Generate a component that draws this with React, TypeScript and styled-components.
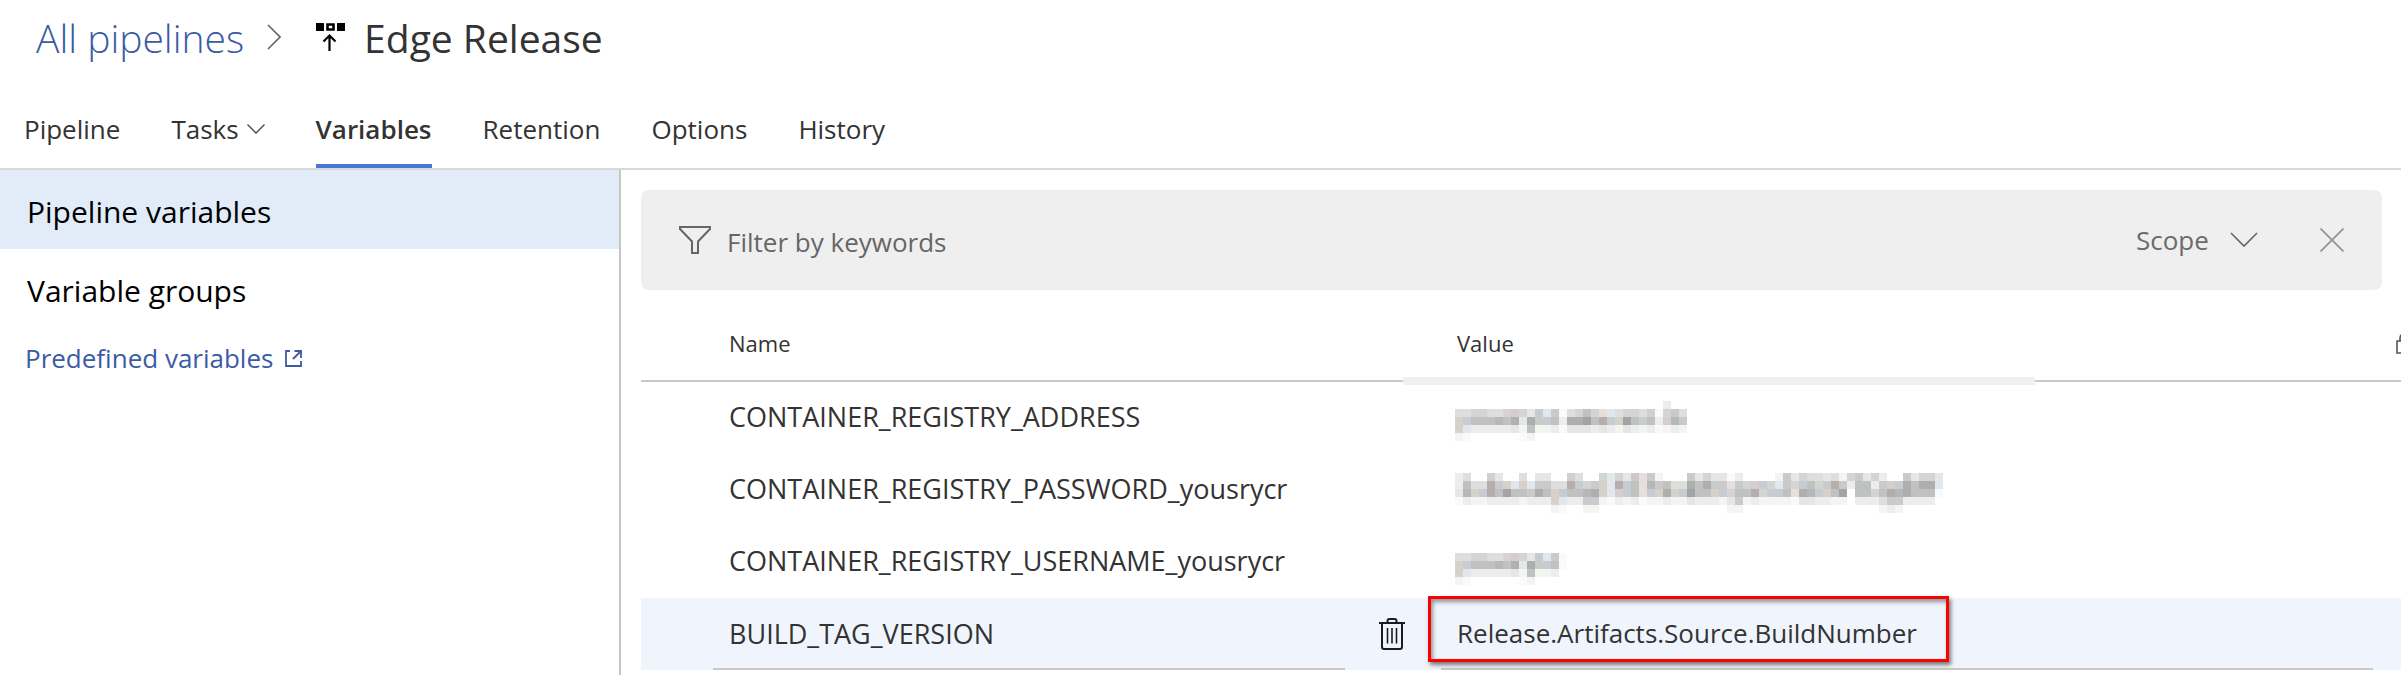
import React from 'react';
import styled, { createGlobalStyle } from 'styled-components';

const GlobalStyle = createGlobalStyle`
  *, *::before, *::after { box-sizing: border-box; }
  html, body, #root { height: 100%; }
  body {
    margin: 0;
    background: #fff;
    color: #333;
    font-family: "Open Sans", "Noto Sans", sans-serif;
    font-size: 26px;
    overflow: hidden;
  }
  a { color: inherit; text-decoration: none; }
  button, input, select {
    font: inherit;
    color: inherit;
    background: none;
    border: 0;
    border-radius: 0;
    padding: 0;
    margin: 0;
    outline: 0;
  }
  svg { display: block; flex: none; }
`;

const Page = styled.div`
  display: flex;
  flex-direction: column;
  min-height: 100%;
`;

const Header = styled.header`
  display: flex;
  align-items: center;
  height: 74px;
  padding-left: 36px;
  font-size: 39px;
  white-space: nowrap;
`;

const Crumb = styled.a`
  color: #3b5ba5;
  font-weight: 300;
  margin-right: 23px;
`;

const Title = styled.h1`
  margin: 0 0 0 19px;
  font-size: 39px;
  font-weight: 400;
`;

const PipelineMark = styled.svg`
  margin-left: 35px;
`;

const Tabs = styled.nav`
  display: flex;
  gap: 51px;
  padding: 16px 0 0 24px;
  border-bottom: 2px solid #d9d9d9;
`;

const Tab = styled.a<{ $active?: boolean }>`
  display: flex;
  align-items: center;
  gap: 8px;
  height: 78px;
  font-weight: ${(p) => (p.$active ? 600 : 400)};
  box-shadow: ${(p) => (p.$active ? 'inset 0 -4px #4878d4' : 'none')};
`;

const Body = styled.div`
  display: flex;
  flex: 1;
`;

const Sidebar = styled.aside`
  flex: none;
  width: 621px;
  border-right: 2px solid #c4c6c8;
`;

const SideItem = styled.a<{ $active?: boolean }>`
  display: flex;
  align-items: center;
  height: 79px;
  padding: 4px 27px 0;
  font-size: 30px;
  color: #000;
  background: ${(p) => (p.$active ? '#e1ecf8' : 'transparent')};
`;

const SideLink = styled.a`
  display: flex;
  align-items: center;
  gap: 12px;
  height: 60px;
  padding-left: 25px;
  color: #3b5ba5;
`;

const Main = styled.main`
  flex: 1;
  min-width: 0;
  padding: 20px 0 0 20px;
  overflow: hidden;
`;

const FilterBar = styled.div`
  display: flex;
  align-items: center;
  height: 100px;
  margin-right: 19px;
  padding: 0 38px;
  border-radius: 8px;
  background: #efefef;
  color: #666;
`;

const FilterInput = styled.input`
  flex: 1;
  min-width: 0;
  padding: 4px 0 0 16px;
  &::placeholder { color: #666; opacity: 1; }
`;

const ScopeField = styled.div`
  display: flex;
  align-items: center;
  gap: 21px;
`;

const ScopeSelect = styled.select`
  appearance: none;
  color: #6b6b6b;
`;

const ClearButton = styled.button`
  display: flex;
  margin-left: 62px;
`;

const Table = styled.table`
  width: 100%;
  table-layout: fixed;
  border-collapse: separate;
  border-spacing: 0;
`;

const NameCol = styled.col`
  width: 800px;
`;

const LockCol = styled.col`
  width: 28px;
`;

const HeadCell = styled.th`
  position: relative;
  height: 92px;
  padding: 15px 16px 0;
  border-bottom: 2px solid #c8c8c8;
  text-align: left;
  font-size: 22px;
  font-weight: 400;
  &:first-child { padding-left: 88px; }
  &:last-child { padding: 15px 0 0 23px; }
`;

const ScrollThumb = styled.div`
  position: absolute;
  z-index: 1;
  left: -38px;
  bottom: -5px;
  width: 632px;
  height: 8px;
  background: #f0f0f0;
`;

const Row = styled.tr<{ $selected?: boolean }>`
  background: ${(p) => (p.$selected ? '#f0f5fd' : 'transparent')};
`;

const NameCell = styled.td`
  height: 72px;
  padding: 0 0 3px 88px;
  font-size: 27px;
`;

const MaskedCell = styled.td`
  padding: 19px 0 0 14px;
  vertical-align: top;
`;

const EditNameCell = styled.td`
  padding: 0 0 0 72px;
`;

const EditName = styled.div`
  display: flex;
  align-items: center;
  gap: 34px;
  padding-right: 36px;
  font-size: 27px;
`;

const EditValueCell = styled.td`
  position: relative;
  padding: 0;
`;

const CellInput = styled.input`
  display: block;
  flex: 1;
  width: 100%;
  min-width: 0;
  height: 72px;
  padding: 0 16px;
  border-bottom: 2px solid #c8c8c8;
`;

const DeleteButton = styled.button`
  display: flex;
`;

const Callout = styled.div`
  position: absolute;
  left: -13px;
  top: -2px;
  width: 521px;
  height: 66px;
  border: 3px solid #fe0000;
  box-shadow: 2px 3px 4px rgba(0, 0, 0, 0.5), inset 2px 3px 4px rgba(0, 0, 0, 0.4);
  pointer-events: none;
`;

const TINTS: Record<string, string> = {
  A: '#a2a3a4', B: '#aeaeac', C: '#b6b7b7', D: '#c0c1c1', E: '#cacaca', F: '#d4d4d3',
  G: '#dededd', H: '#e6e6e6', I: '#ededed', J: '#f4f4f3', K: '#fafafa',
  r: '#b6adad', s: '#d6cece', p: '#e6dfdd', w: '#d6d1ca', b: '#c7ccd2', v: '#e1e8ed',
};

const MASK_USER = ['', 'GGFFGGFsFHEvEK', 'wbDDDCDrvBEbDK', 'wvIIIIIHJDJJI', 'JK......KJ'];
const MASK_ADDRESS = [
  '..........................I',
  'GGFFGGFsFHEvEKGFDFpvGFFGsKFEG',
  'wbDDDCDrvBEbDIBBADrbwADbDIsCE',
  'wvIIIIIHJDJJIKHHHIHIJHIJIKJIJ',
  'JK......KJ',
];
const MASK_PASSWORD = [
  'IG..sH..G.HH..sG..FvFHEpEJ...EHFHHKI....JEHFGGHGJFEHFI..EHFFH',
  'IDGGrbwvwvEEGGrbFbwvrbDpCEDGGBDBEEpEFsbFvEFbDFErEIDDIEsbBDBBv',
  'HCwbrDADDEBDwbDDCBwvsbDpbwBwbADDwbFDDrFbbDpBCbwDA.DDFDBCBDDDK',
  'KIJJIIIIJIIIwvIIEbJKIJIKJJIJJHIIIJHEJIJJJJKHHIIJJ.IIIGEbIIII',
  '............JK..JJ................JJ.................JIJ',
];

function MaskedValue({ cells, label }: { cells: string[]; label: string }) {
  const columns = Math.max(...cells.map((line) => line.length));
  return (
    <svg width={columns * 8} height={40} shapeRendering="crispEdges" role="img" aria-label={label}>
      {cells.map((line, y) =>
        [...line].map((c, x) =>
          c === '.' ? null : <rect key={`${x}-${y}`} x={x * 8} y={y * 8} width={8} height={8} fill={TINTS[c]} />,
        ),
      )}
    </svg>
  );
}

const rows = [
  { name: 'CONTAINER_REGISTRY_ADDRESS', mask: MASK_ADDRESS },
  { name: 'CONTAINER_REGISTRY_PASSWORD_yousrycr', mask: MASK_PASSWORD },
  { name: 'CONTAINER_REGISTRY_USERNAME_yousrycr', mask: MASK_USER },
];

export default function App() {
  return (
    <Page>
      <GlobalStyle />
      <Header>
        <Crumb href="#pipelines">All pipelines</Crumb>
        <svg width="14" height="26" viewBox="0 0 14 26" fill="none" stroke="#666" strokeWidth="1.6">
          <path d="M1 1l12 12L1 25" />
        </svg>
        <PipelineMark width="29" height="28" viewBox="0 0 29 28">
          <path d="M0 0h8v8H0zM21 0h8v8h-8z" fill="#000" />
          <path d="M11.5 1.5h6v5h-6z" fill="#fff" stroke="#000" strokeWidth="2.6" />
          <path d="M13.5 28V13M7.5 18.5l6-6 6 6" fill="none" stroke="#000" strokeWidth="2.2" />
        </PipelineMark>
        <Title>Edge Release</Title>
      </Header>

      <Tabs>
        <Tab href="#pipeline">Pipeline</Tab>
        <Tab href="#tasks">
          Tasks
          <svg width="18" height="10" viewBox="0 0 18 10" fill="none" stroke="#444" strokeWidth="1.3">
            <path d="M.5.5L9 9L17.5.5" />
          </svg>
        </Tab>
        <Tab href="#variables" $active>Variables</Tab>
        <Tab href="#retention">Retention</Tab>
        <Tab href="#options">Options</Tab>
        <Tab href="#history">History</Tab>
      </Tabs>

      <Body>
        <Sidebar>
          <SideItem href="#pipeline-variables" $active>Pipeline variables</SideItem>
          <SideItem href="#variable-groups">Variable groups</SideItem>
          <SideLink href="#predefined">
            Predefined variables
            <svg width="17" height="17" viewBox="0 0 17 17" fill="none" stroke="#3b5ba5" strokeWidth="1.8">
              <path d="M5 1H1v15h15v-5M8 9l8-8M9.5 1H16v7" />
            </svg>
          </SideLink>
        </Sidebar>

        <Main>
          <FilterBar>
            <svg width="32" height="28" viewBox="0 0 32 28" fill="none" stroke="#666" strokeWidth="2">
              <path d="M1 1h30v2L19 15.5V27h-6V15.5L1 3z" />
            </svg>
            <FilterInput type="text" placeholder="Filter by keywords" aria-label="Filter by keywords" />
            <ScopeField>
              <ScopeSelect aria-label="Scope">
                <option>Scope</option>
              </ScopeSelect>
              <svg width="28" height="16" viewBox="0 0 28 16" fill="none" stroke="#666" strokeWidth="1.6">
                <path d="M1 1l13 13L27 1" />
              </svg>
            </ScopeField>
            <ClearButton type="button" aria-label="Clear filter">
              <svg width="24" height="24" viewBox="0 0 24 24" fill="none" stroke="#949494" strokeWidth="1.8">
                <path d="M.5.5l23 23M23.5.5l-23 23" />
              </svg>
            </ClearButton>
          </FilterBar>

          <Table>
            <colgroup>
              <NameCol />
              <col />
              <LockCol />
            </colgroup>
            <thead>
              <tr>
                <HeadCell scope="col">Name</HeadCell>
                <HeadCell scope="col">
                  Value
                  <ScrollThumb />
                </HeadCell>
                <HeadCell scope="col" aria-label="Secret">
                  <svg width="20" height="22" viewBox="0 0 20 22" fill="none" stroke="#555" strokeWidth="1.6">
                    <path d="M1 9h18v12H1zM4 9V6a6 5 0 0 1 12 0v3" />
                  </svg>
                </HeadCell>
              </tr>
            </thead>
            <tbody>
              {rows.map((row) => (
                <Row key={row.name}>
                  <NameCell>{row.name}</NameCell>
                  <MaskedCell>
                    <MaskedValue cells={row.mask} label="Hidden value" />
                  </MaskedCell>
                  <td />
                </Row>
              ))}
              <Row $selected>
                <EditNameCell>
                  <EditName>
                    <CellInput aria-label="Variable name" defaultValue="BUILD_TAG_VERSION" />
                    <DeleteButton type="button" aria-label="Delete variable">
                      <svg width="26" height="32" viewBox="0 0 26 32" fill="none" stroke="#1c1a24" strokeWidth="2">
                        <path d="M0 5h26M8.5 5V3q0-2 2-2h5q2 0 2 2v2M3 5v24q0 2 2 2h16q2 0 2-2V5" />
                        <path d="M8.5 10v15.5M13 10v15.5M17.5 10v15.5" strokeWidth="1.6" />
                      </svg>
                    </DeleteButton>
                  </EditName>
                </EditNameCell>
                <EditValueCell>
                  <CellInput aria-label="Variable value" defaultValue="Release.Artifacts.Source.BuildNumber" />
                  <Callout />
                </EditValueCell>
                <td />
              </Row>
            </tbody>
          </Table>
        </Main>
      </Body>
    </Page>
  );
}
